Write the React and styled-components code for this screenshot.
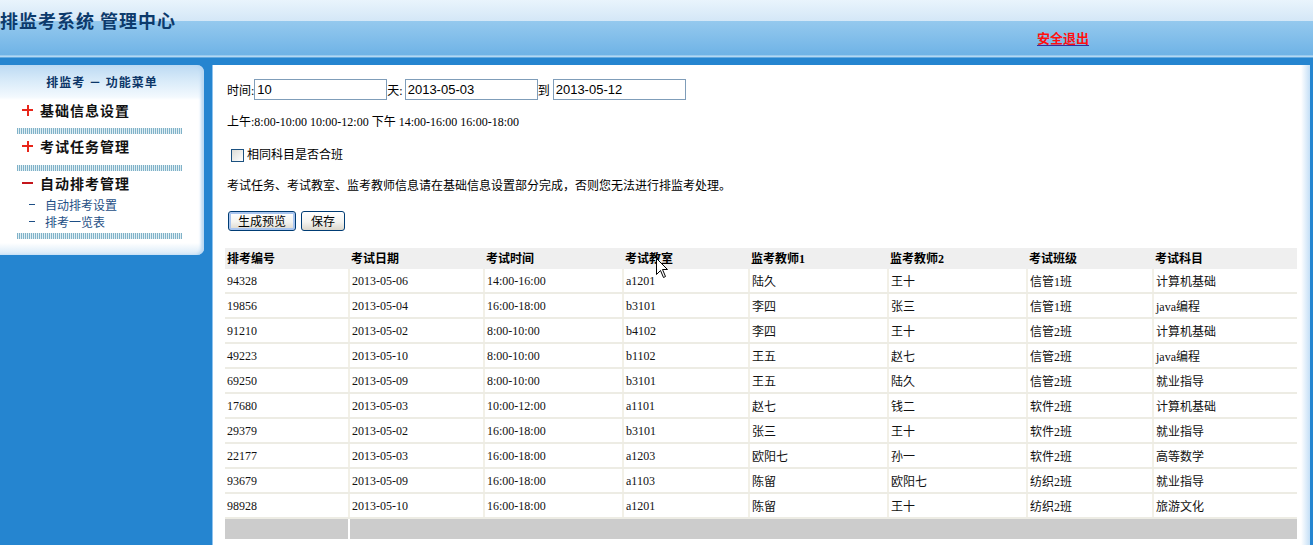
import React from 'react';
import styled, { createGlobalStyle } from 'styled-components';

const Global = createGlobalStyle`
  html, body { margin: 0; padding: 0; }
  body {
    background: #2585d0;
    font-family: "Liberation Serif", "Noto Sans CJK SC", serif;
    font-size: 12px;
    color: #000;
    overflow: hidden;
  }
`;

const Page = styled.div`
  height: 545px;
  display: flex;
  flex-direction: column;
`;

const Header = styled.header`
  height: 58px;
  flex: none;
  display: flex;
  align-items: flex-start;
  background: linear-gradient(
    to bottom,
    #e9f4fc 0,
    #d4e7f7 21px,
    #95c9ee 21px,
    #6fb3e6 55px,
    #c3e1f6 56px,
    #a5d0f0 57px,
    #2585d0 58px
  );
`;

const Title = styled.h1`
  margin: 9px 0 0 0;
  font-family: "Noto Sans CJK SC", sans-serif;
  font-size: 18px;
  line-height: 22px;
  font-weight: 700;
  letter-spacing: 1px;
  color: #0c3a6c;
  white-space: pre;
`;

const Logout = styled.a`
  margin: 29px 224px 0 auto;
  font-family: "Noto Sans CJK SC", sans-serif;
  font-size: 13px;
  line-height: 17px;
  font-weight: 700;
  color: #ff1010;
  text-decoration: underline;
  text-decoration-color: #3b2b9b;
  text-underline-offset: 2px;
  cursor: pointer;
`;

const Main = styled.div`
  flex: 1;
  display: flex;
  gap: 8px;
  padding: 7px 3px 0 0;
  min-height: 0;
`;

const SidePanel = styled.aside`
  width: 204px;
  height: 190px;
  flex: none;
  border-radius: 0 7px 7px 0;
  background: linear-gradient(
    to bottom,
    #bcdaf3 0,
    #d9ebf9 16px,
    #f3f9fe 32px,
    #fff 35px,
    #fff calc(100% - 12px),
    #d6e9f8 100%
  );
  box-shadow: inset -3px 0 3px #b9d8f2;
`;

const SideTitle = styled.div`
  height: 33px;
  display: flex;
  align-items: center;
  justify-content: center;
  font-family: "Noto Sans CJK SC", sans-serif;
  font-size: 12px;
  font-weight: 700;
  letter-spacing: 1px;
  color: #0c3668;
  white-space: pre;
`;

const MenuHead = styled.div`
  height: 24px;
  display: flex;
  align-items: center;
  padding-left: 22px;
  font-family: "Noto Sans CJK SC", sans-serif;
  font-size: 14px;
  font-weight: 700;
  letter-spacing: 1px;
  color: #111;
`;

const Sign = styled.span`
  width: 11px;
  height: 11px;
  margin-right: 7px;
  flex: none;
  background: ${(p) =>
    p.$open
      ? 'linear-gradient(#c4161c, #c4161c) center / 11px 2px no-repeat'
      : 'linear-gradient(#e8261a, #e8261a) center / 11px 2px no-repeat, linear-gradient(#e8261a, #e8261a) center / 2px 11px no-repeat'};
`;

const Separator = styled.div`
  height: 6px;
  width: 165px;
  margin: ${(p) => p.$top}px 0 0 17px;
  background: repeating-linear-gradient(90deg, #80b2c8 0 1px, #e0eef4 1px 2px);
`;

const SubList = styled.div`
  margin-top: 1px;
`;

const SubItem = styled.a`
  height: 17px;
  display: flex;
  align-items: center;
  padding-left: 29px;
  font-family: "Noto Sans CJK SC", sans-serif;
  font-size: 12px;
  color: #1d4e85;
  cursor: pointer;
  &::before {
    content: "";
    width: 6px;
    height: 1px;
    background: #1d4e85;
    margin-right: 10px;
  }
`;

const Content = styled.main`
  flex: 1;
  min-width: 0;
  padding: 14px 13px 0 13px;
  background: linear-gradient(to right, #fff calc(100% - 9px), #c4dff6 100%);
  box-shadow: inset 1px 0 0 #8fc3ee;
`;

const FieldRow = styled.div`
  height: 21px;
  display: flex;
  align-items: center;
  padding-left: 2px;
`;

const Label = styled.span`
  margin-right: ${(p) => p.$gap || 0}px;
  white-space: pre;
`;

const TextInput = styled.input`
  width: 133px;
  height: 21px;
  box-sizing: border-box;
  border: 1px solid #7f9db9;
  padding: 0 2px;
  font-family: "Liberation Sans", sans-serif;
  font-size: 13px;
  color: #000;
  background: #fff;
  outline: none;
`;

const Line = styled.div`
  margin-top: ${(p) => p.$top}px;
  height: ${(p) => p.$h || 12}px;
  line-height: ${(p) => p.$h || 12}px;
  padding-left: 2px;
  white-space: pre;
  display: flex;
  align-items: center;
`;

const Check = styled.input`
  appearance: none;
  width: 13px;
  height: 13px;
  margin: 0 3px 0 4px;
  box-sizing: border-box;
  border: 1px solid #1c5180;
  background: linear-gradient(135deg, #dcdcd7, #fff);
`;

const ButtonRow = styled.div`
  margin-top: 19px;
  display: flex;
  gap: 5px;
  padding-left: 3px;
`;

const Button = styled.button`
  height: 20px;
  width: ${(p) => p.$w}px;
  padding: 0;
  border: 1px solid #003c74;
  border-radius: 3px;
  background: linear-gradient(#ffffff, #f4f4f0 55%, #dcd7cc);
  font-family: "Noto Sans CJK SC", sans-serif;
  font-size: 12px;
  line-height: 18px;
  color: #000;
  box-shadow: ${(p) => (p.$default ? 'inset 0 0 0 2px #a9c5ef' : 'none')};
`;

const TableWrap = styled.div`
  margin-top: 17px;
  position: relative;
  width: 1072px;
`;

const Table = styled.table`
  width: 1072px;
  border-collapse: collapse;
  table-layout: fixed;
`;

const Th = styled.th`
  box-sizing: border-box;
  width: ${(p) => p.$w}px;
  height: 21px;
  padding: 0 2px 2px;
  background: #efefef;
  text-align: left;
  font-weight: 700;
  font-size: 12px;
  white-space: nowrap;
`;

const Td = styled.td`
  height: 22px;
  padding: 1px 2px 0;
  border-bottom: 2px solid #edece4;
  border-left: ${(p) => (p.$first ? 'none' : '2px solid #f2f0e7')};
  font-size: 12px;
  white-space: nowrap;
  color: #111;
`;

const FootCell = styled.td`
  height: 20px;
  padding: 0;
  background: #cccccc;
  border-left: ${(p) => (p.$first ? 'none' : '2px solid #fff')};
`;

const Cursor = styled.svg`
  position: absolute;
  left: 431px;
  top: 10px;
  pointer-events: none;
`;

const headers = [
  ['排考编号', 124],
  ['考试日期', 135],
  ['考试时间', 139],
  ['考试教室', 126],
  ['监考教师1', 139],
  ['监考教师2', 139],
  ['考试班级', 126],
  ['考试科目', 144],
];

const rows = [
  ['94328', '2013-05-06', '14:00-16:00', 'a1201', '陆久', '王十', '信管1班', '计算机基础'],
  ['19856', '2013-05-04', '16:00-18:00', 'b3101', '李四', '张三', '信管1班', 'java编程'],
  ['91210', '2013-05-02', '8:00-10:00', 'b4102', '李四', '王十', '信管2班', '计算机基础'],
  ['49223', '2013-05-10', '8:00-10:00', 'b1102', '王五', '赵七', '信管2班', 'java编程'],
  ['69250', '2013-05-09', '8:00-10:00', 'b3101', '王五', '陆久', '信管2班', '就业指导'],
  ['17680', '2013-05-03', '10:00-12:00', 'a1101', '赵七', '钱二', '软件2班', '计算机基础'],
  ['29379', '2013-05-02', '16:00-18:00', 'b3101', '张三', '王十', '软件2班', '就业指导'],
  ['22177', '2013-05-03', '16:00-18:00', 'a1203', '欧阳七', '孙一', '软件2班', '高等数学'],
  ['93679', '2013-05-09', '16:00-18:00', 'a1103', '陈留', '欧阳七', '纺织2班', '就业指导'],
  ['98928', '2013-05-10', '16:00-18:00', 'a1201', '陈留', '王十', '纺织2班', '旅游文化'],
];

export default function App() {
  return (
    <Page>
      <Global />
      <Header>
        <Title>排监考系统 管理中心</Title>
        <Logout>安全退出</Logout>
      </Header>
      <Main>
        <SidePanel>
          <SideTitle>排监考 － 功能菜单</SideTitle>
          <MenuHead><Sign />基础信息设置</MenuHead>
          <Separator $top={6} />
          <MenuHead><Sign />考试任务管理</MenuHead>
          <Separator $top={7} />
          <MenuHead><Sign $open />自动排考管理</MenuHead>
          <SubList>
            <SubItem>自动排考设置</SubItem>
            <SubItem>排考一览表</SubItem>
          </SubList>
          <Separator $top={3} />
        </SidePanel>
        <Content>
          <FieldRow>
            <Label>时间:</Label>
            <TextInput defaultValue="10" />
            <Label $gap={2}>天:</Label>
            <TextInput defaultValue="2013-05-03" />
            <Label $gap={3}>到</Label>
            <TextInput defaultValue="2013-05-12" />
          </FieldRow>
          <Line $top={16}>上午:8:00-10:00 10:00-12:00 下午 14:00-16:00 16:00-18:00</Line>
          <Line $top={21} $h={13}>
            <Check type="checkbox" />
            相同科目是否合班
          </Line>
          <Line $top={18}>考试任务、考试教室、监考教师信息请在基础信息设置部分完成，否则您无法进行排监考处理。</Line>
          <ButtonRow>
            <Button $w={68} $default>生成预览</Button>
            <Button $w={44}>保存</Button>
          </ButtonRow>
          <TableWrap>
            <Table>
              <thead>
                <tr>
                  {headers.map(([h, w]) => (
                    <Th key={h} $w={w}>{h}</Th>
                  ))}
                </tr>
              </thead>
              <tbody>
                {rows.map((r) => (
                  <tr key={r[0]}>
                    {r.map((c, i) => (
                      <Td key={i} $first={i === 0}>{c}</Td>
                    ))}
                  </tr>
                ))}
                <tr>
                  <FootCell $first />
                  <FootCell colSpan={7} />
                </tr>
              </tbody>
            </Table>
            <Cursor width="13" height="21" viewBox="0 0 13 21">
              <path d="M0.5 0.5 L0.5 16.5 L4.5 12.5 L7.5 19.5 L9.5 18.5 L6.5 11.5 L11.5 11.5 Z" fill="#fff" stroke="#000" strokeWidth="1" />
            </Cursor>
          </TableWrap>
        </Content>
      </Main>
    </Page>
  );
}
